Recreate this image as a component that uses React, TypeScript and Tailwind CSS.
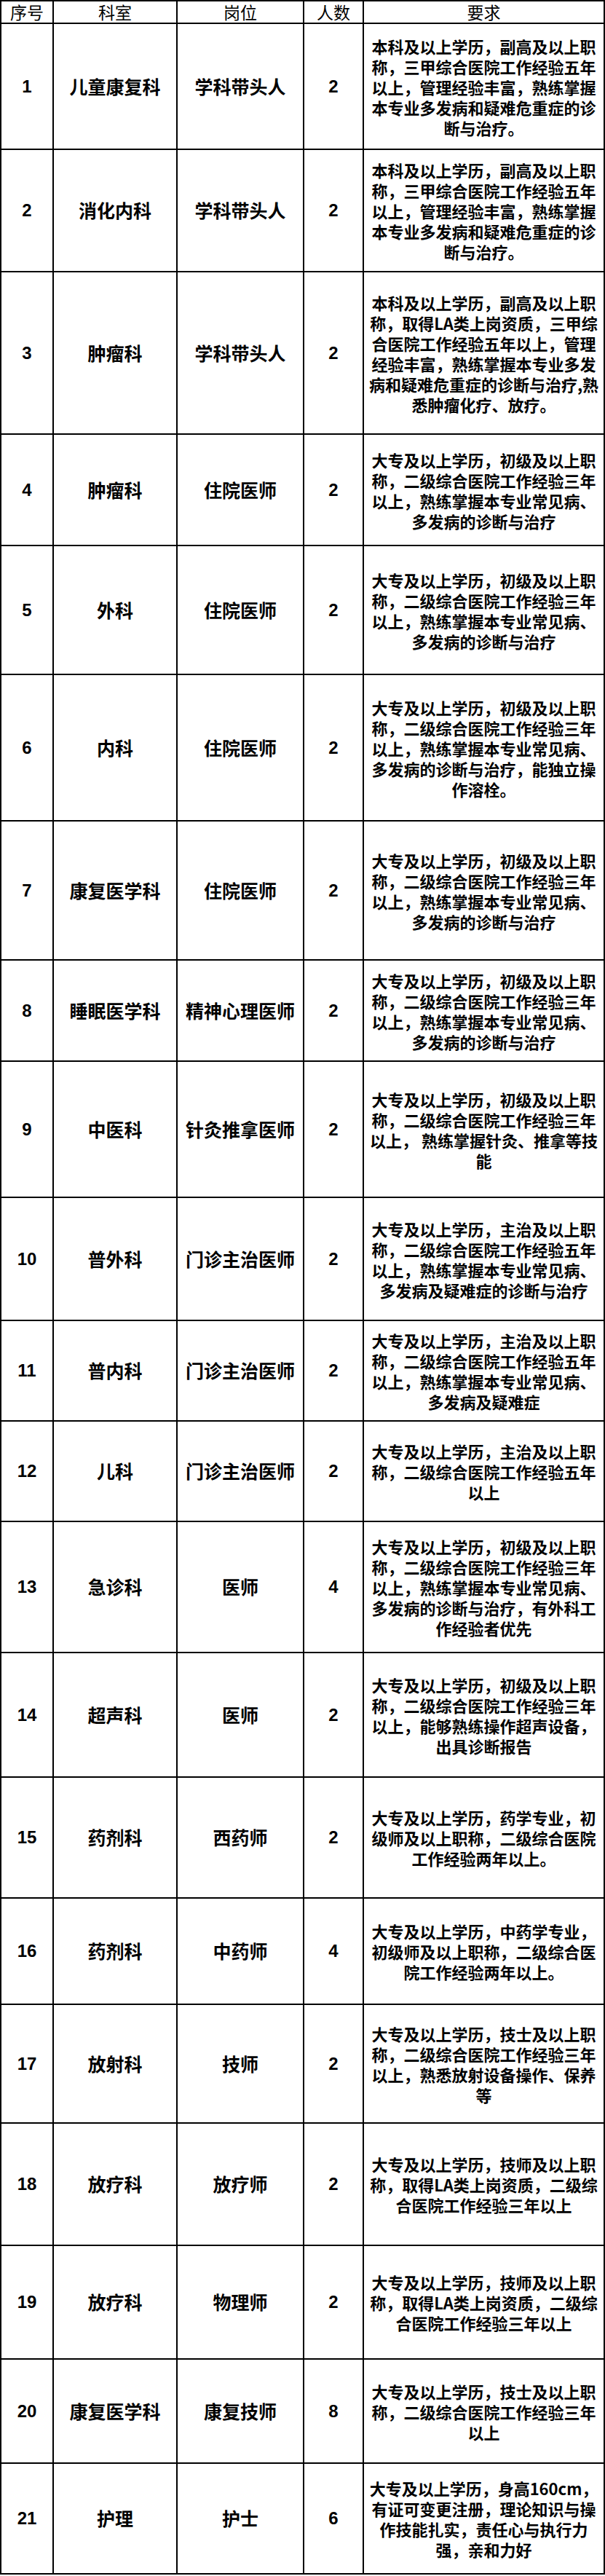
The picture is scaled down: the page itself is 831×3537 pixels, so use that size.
import React from "react";

type Row = {
  n: string;
  dept: string;
  post: string;
  count: string;
  req: string[];
  h: string;
};

const rows: Row[] = [
  { n: "1", dept: "儿童康复科", post: "学科带头人", count: "2", h: "h-[173px]", req: ["本科及以上学历，副高及以上职", "称，三甲综合医院工作经验五年", "以上，管理经验丰富，熟练掌握", "本专业多发病和疑难危重症的诊", "断与治疗。"] },
  { n: "2", dept: "消化内科", post: "学科带头人", count: "2", h: "h-[168px]", req: ["本科及以上学历，副高及以上职", "称，三甲综合医院工作经验五年", "以上，管理经验丰富，熟练掌握", "本专业多发病和疑难危重症的诊", "断与治疗。"] },
  { n: "3", dept: "肿瘤科", post: "学科带头人", count: "2", h: "h-[223px]", req: ["本科及以上学历，副高及以上职", "称，取得LA类上岗资质，三甲综", "合医院工作经验五年以上，管理", "经验丰富，熟练掌握本专业多发", "病和疑难危重症的诊断与治疗,熟", "悉肿瘤化疗、放疗。"] },
  { n: "4", dept: "肿瘤科", post: "住院医师", count: "2", h: "h-[153px]", req: ["大专及以上学历，初级及以上职", "称，二级综合医院工作经验三年", "以上，熟练掌握本专业常见病、", "多发病的诊断与治疗"] },
  { n: "5", dept: "外科", post: "住院医师", count: "2", h: "h-[177px]", req: ["大专及以上学历，初级及以上职", "称，二级综合医院工作经验三年", "以上，熟练掌握本专业常见病、", "多发病的诊断与治疗"] },
  { n: "6", dept: "内科", post: "住院医师", count: "2", h: "h-[201px]", req: ["大专及以上学历，初级及以上职", "称，二级综合医院工作经验三年", "以上，熟练掌握本专业常见病、", "多发病的诊断与治疗，能独立操", "作溶栓。"] },
  { n: "7", dept: "康复医学科", post: "住院医师", count: "2", h: "h-[191px]", req: ["大专及以上学历，初级及以上职", "称，二级综合医院工作经验三年", "以上，熟练掌握本专业常见病、", "多发病的诊断与治疗"] },
  { n: "8", dept: "睡眠医学科", post: "精神心理医师", count: "2", h: "h-[139px]", req: ["大专及以上学历，初级及以上职", "称，二级综合医院工作经验三年", "以上，熟练掌握本专业常见病、", "多发病的诊断与治疗"] },
  { n: "9", dept: "中医科", post: "针灸推拿医师", count: "2", h: "h-[187px]", req: ["大专及以上学历，初级及以上职", "称，二级综合医院工作经验三年", "以上， 熟练掌握针灸、推拿等技", "能"] },
  { n: "10", dept: "普外科", post: "门诊主治医师", count: "2", h: "h-[169px]", req: ["大专及以上学历，主治及以上职", "称，二级综合医院工作经验五年", "以上，熟练掌握本专业常见病、", "多发病及疑难症的诊断与治疗"] },
  { n: "11", dept: "普内科", post: "门诊主治医师", count: "2", h: "h-[138px]", req: ["大专及以上学历，主治及以上职", "称，二级综合医院工作经验五年", "以上，熟练掌握本专业常见病、", "多发病及疑难症"] },
  { n: "12", dept: "儿科", post: "门诊主治医师", count: "2", h: "h-[138px]", req: ["大专及以上学历，主治及以上职", "称，二级综合医院工作经验五年", "以上"] },
  { n: "13", dept: "急诊科", post: "医师", count: "4", h: "h-[180px]", req: ["大专及以上学历，初级及以上职", "称，二级综合医院工作经验三年", "以上，熟练掌握本专业常见病、", "多发病的诊断与治疗，有外科工", "作经验者优先"] },
  { n: "14", dept: "超声科", post: "医师", count: "2", h: "h-[171px]", req: ["大专及以上学历，初级及以上职", "称，二级综合医院工作经验三年", "以上，能够熟练操作超声设备，", "出具诊断报告"] },
  { n: "15", dept: "药剂科", post: "西药师", count: "2", h: "h-[166px]", req: ["大专及以上学历，药学专业，初", "级师及以上职称，二级综合医院", "工作经验两年以上。"] },
  { n: "16", dept: "药剂科", post: "中药师", count: "4", h: "h-[146px]", req: ["大专及以上学历，中药学专业，", "初级师及以上职称，二级综合医", "院工作经验两年以上。"] },
  { n: "17", dept: "放射科", post: "技师", count: "2", h: "h-[163px]", req: ["大专及以上学历，技士及以上职", "称，二级综合医院工作经验三年", "以上，熟悉放射设备操作、保养", "等"] },
  { n: "18", dept: "放疗科", post: "放疗师", count: "2", h: "h-[168px]", req: ["大专及以上学历，技师及以上职", "称，取得LA类上岗资质，二级综", "合医院工作经验三年以上"] },
  { n: "19", dept: "放疗科", post: "物理师", count: "2", h: "h-[156px]", req: ["大专及以上学历，技师及以上职", "称，取得LA类上岗资质，二级综", "合医院工作经验三年以上"] },
  { n: "20", dept: "康复医学科", post: "康复技师", count: "8", h: "h-[143px]", req: ["大专及以上学历，技士及以上职", "称，二级综合医院工作经验三年", "以上"] },
  { n: "21", dept: "护理", post: "护士", count: "6", h: "h-[152px]", req: ["大专及以上学历，身高160cm，", "有证可变更注册，理论知识与操", "作技能扎实，责任心与执行力", "强，亲和力好"] },
];

const cjk = "font-['Noto_Sans_CJK_SC','Noto_Sans',sans-serif]";
const num = "font-['Liberation_Sans_Narrow','Liberation_Sans','Noto_Sans_CJK_SC',sans-serif]";
const grid = "grid grid-cols-[72px_170px_174px_82px_1fr]";
const cell = "flex items-center justify-center border-r-2 border-b-2 border-black text-black";

export default function App() {
  return (
    <div className="w-[831px] bg-white">
      <div className="border-l-2 border-t-2 border-black">
        <div className={`${grid} h-[31px] ${cjk} text-[23px] font-normal leading-none`}>
          <div className={cell}>序号</div>
          <div className={cell}>科室</div>
          <div className={cell}>岗位</div>
          <div className={cell}>人数</div>
          <div className={cell}>要求</div>
        </div>
        {rows.map((r) => (
          <div key={r.n} className={`${grid} ${r.h}`}>
            <div className={`${cell} ${num} text-[24px] font-bold`}>{r.n}</div>
            <div className={`${cell} ${cjk} text-[25px] font-bold whitespace-nowrap`}>{r.dept}</div>
            <div className={`${cell} ${cjk} text-[25px] font-bold whitespace-nowrap`}>{r.post}</div>
            <div className={`${cell} ${num} text-[24px] font-bold`}>{r.count}</div>
            <div className={`${cell} ${cjk} text-[22px] font-bold leading-[28px] flex-col`}>
              {r.req.map((l, i) => (
                <div key={i} className="whitespace-nowrap text-center">{l}</div>
              ))}
            </div>
          </div>
        ))}
      </div>
    </div>
  );
}
